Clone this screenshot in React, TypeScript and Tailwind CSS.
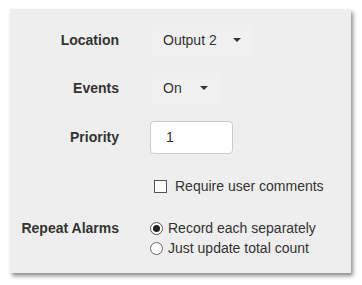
import React from "react";

const Caret = ({ ml }: { ml: string }) => (
  <span
    className={`inline-block shrink-0 w-0 h-0 border-t-[4px] border-t-[#333] border-l-[4px] border-l-transparent border-r-[4px] border-r-transparent ${ml}`}
  />
);

export default function App() {
  return (
    <div className="w-[362px] h-[285px] bg-white pt-[9px] pl-[10px]" style={{ fontFamily: '"Liberation Sans", Arial, sans-serif' }}>
      <div className="w-[341px] h-[264px] bg-[#eeeeee] shadow-[2px_3px_4px_rgba(0,0,0,0.45)] pt-[14px] text-[14px] text-[#333]">
        {/* Location */}
        <div className="flex items-center h-[34px]">
          <div className="w-[109px] text-right font-bold">Location</div>
          <div className="ml-[32px] flex items-center whitespace-nowrap h-[31px] pl-[12px] pr-[12px] rounded-[3px] bg-[#f0f0f0]">
            <span>Output 2</span>
            <Caret ml="ml-[16px]" />
          </div>
        </div>
        {/* Events */}
        <div className="flex items-center h-[34px] mt-[14px]">
          <div className="w-[109px] text-right font-bold">Events</div>
          <div className="ml-[32px] flex items-center whitespace-nowrap h-[31px] pl-[12px] pr-[12px] rounded-[3px] bg-[#f0f0f0]">
            <span>On</span>
            <Caret ml="ml-[18px]" />
          </div>
        </div>
        {/* Priority */}
        <div className="flex items-center h-[34px] mt-[15px]">
          <div className="w-[109px] text-right font-bold">Priority</div>
          <div className="ml-[31px] flex items-center h-[33px] w-[83px] px-[15px] rounded-[4px] border border-[#cccccc] bg-white">
            1
          </div>
        </div>
        {/* Checkbox */}
        <div className="flex items-center h-[34px] mt-[15px]">
          <div className="ml-[144px] w-[13px] h-[13px] border border-[#555] bg-[#fbfbfb]" />
          <span className="ml-[8px]">Require user comments</span>
        </div>
        {/* Repeat Alarms */}
        <div className="flex mt-[15px]">
          <div className="w-[109px] text-right font-bold h-[20px] leading-[20px]">Repeat Alarms</div>
          <div className="ml-[31px] flex flex-col">
            <div className="flex items-center h-[20px]">
              <span className="w-[13px] h-[13px] rounded-full border border-[#555] bg-white flex items-center justify-center">
                <span className="w-[7px] h-[7px] rounded-full bg-[#222]" />
              </span>
              <span className="ml-[5px]">Record each separately</span>
            </div>
            <div className="flex items-center h-[20px]">
              <span className="w-[13px] h-[13px] rounded-full border border-[#666] bg-white" />
              <span className="ml-[5px]">Just update total count</span>
            </div>
          </div>
        </div>
      </div>
    </div>
  );
}
